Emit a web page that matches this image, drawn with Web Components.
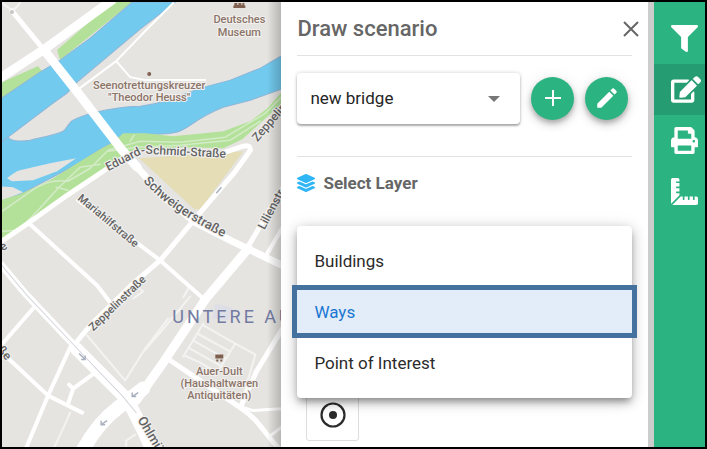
<!DOCTYPE html>
<html lang="en">
<head>
<meta charset="utf-8">
<title>Draw scenario</title>
<style>
html, body { margin: 0; height: 100%; }
body { font-family: Roboto, "Liberation Sans", sans-serif; color: #2b2b2b; background: #fff; }
</style>
</head>
<body>
<scenario-app></scenario-app>
<script>
const define = (name, html) => {
  const t = document.createElement('template');
  t.innerHTML = html;
  customElements.define(name, class extends HTMLElement {
    constructor() {
      super();
      this.attachShadow({ mode: 'open' }).append(t.content.cloneNode(true));
    }
  });
};

/* City map: water, parks, streets and their labels */
define('city-map', `
<style>
:host { display: block; position: relative; overflow: hidden; background: #e5e4e1; }
svg { display: block; width: 100%; height: 100%; }
:host::after { content: ""; position: absolute; inset: 0 0 0 auto; width: 14px; background: linear-gradient(to right, transparent, rgba(0,0,0,.2)); }
.r { fill: none; stroke: #fff; stroke-linejoin: round; stroke-linecap: round; }
.street text, .poi text { paint-order: stroke; stroke: #f2f1ef; stroke-width: 2px; }
.street text { font: 500 11px Roboto, sans-serif; fill: #636363; }
.street .mid { font-size: 12px; }
.street .major { font-size: 13px; }
.poi text { font: 500 11px Roboto, sans-serif; fill: #8c7468; text-anchor: middle; }
.area { font: 400 18px Roboto, sans-serif; fill: #737ba3; letter-spacing: 3px; }
</style>
<svg viewBox="2 2 279 445" preserveAspectRatio="xMinYMin slice" role="img" aria-label="Map">
  <rect x="0" y="0" width="290" height="460" fill="#e5e4e1"/>
  <path fill="#b4e19a" d="M0 83 38 66 42 71 0 100ZM57 50 112 2 132 2 60 60Z"/>
  <path fill="#72cbef" stroke="#8eb6d8" d="M0 99 40 72 60 60 90 38 132 2H175L140 29 77 82 67 93 53 103 8 137 0 143Z"/>
  <path fill="#72cbef" stroke="#8eb6d8" d="M0 143 8 137C12 142 25 141 30 140C42 137 55 135 63 131C68 128 68 121 75 119C90 112 120 106 140 106C170 102 185 93 200 88L230 80 260 68 284 54V88L250 100 223 107C205 114 197 120 190 125C180 132 176 134 150 134H123L113 142 100 149 77 164 20 194 0 200Z"/>
  <path fill="#e5e4e1" d="M7 178C12 174 16 171 20 170L50 163 76 158 57 171 33 180 12 181ZM0 186 13 187 23 192 0 201Z"/>
  <path fill="#b4e19a" d="M284 89 267 108 250 121 223 131 173 136 145 133H123L113 142 100 149 77 163 50 180 20 194 0 200V243L27 223 67 195 112 165 135 150 180 147 223 148 242 139 284 101Z"/>
  <path class="r" style="stroke:#d3ebc7" stroke-width="1.5" d="M2 211 32 190Q50 178 68 181L90 168 108 150 140 141 180 142 225 137 265 113 281 97M2 231 18 230 37 211 58 188 80 167 100 164M56 187 68 190M108 151 138 147 180 145 230 140 260 121M130 141 134 135"/>
  <path fill="#e4ddb6" d="M139 158 243 151 200 209H194Z"/>
  <path fill="#dedfe6" d="M215 303 232 307 228 320 212 318Z"/>
  <g class="r">
    <path stroke="#f3f3f2" stroke-width="2" d="M140 355 160 332 190 296M183 297 188 288M53 449 63 428 70 412M87 335 125 380 145 348 168 318M203 323 183 356M203 325 235 343 255 354 240 405M197 333 230 351M193 340 225 358M188 347 220 365M184 355 200 362 215 371M235 343 215 375M13 11 20 3M13 11 2 3M126 449V440L135 434M133 298 143 291 137 287"/>
    <path stroke-width="2" d="M77 90 116 61 145 31 173 3M116 61 130 77 145 80 205 80"/>
    <path stroke-width="9" d="M0 78 43 50 112 0"/>
    <path stroke-width="5" d="M12 11 44 50"/>
    <path stroke-width="9" d="M44 50 82 98 122 150 137 167"/>
    <path stroke-width="7" d="M137 167 165 198 195 222 230 240 284 266"/>
    <path stroke-width="5" d="M0 242 28 223 67 195 112 165 137 151M222 153 243 146Q250 144 250 150L235 171 200 212 160 260 134 282 90 325 76 342"/>
    <path stroke-width="4" d="M30 224 97 285 110 302M78 200 140 245 160 260 204 299M33 308 0 346M4 354 48 395 82 412M70 347 48 395 25 450M95 372 73 388 68 403M73 388 69 384M267 253 284 224"/>
    <path stroke-width="5" d="M246 249 262 222 284 185M167 358 197 378 240 407C260 420 264 434 280 449M240 407 256 371 284 325"/>
    <path stroke-width="3" d="M243 407 253 410 282 408M270 435 282 426"/>
    <path stroke-width="9" d="M248 248 205 299 163 362 136 400"/>
    <path stroke-width="14" d="M143 388 118 407Q98 422 83 449"/>
    <path stroke-width="7" d="M0 263 27 295 77 348"/>
    <path stroke-width="13" d="M76 348 97 369 128 400 143 430 153 452"/>
    <path stroke="#d5d6dc" stroke-width="1" d="M0 263 27 295 77 348 97 369 122 395 136 412"/>
  </g>
  <path fill="none" stroke="#abb0bf" stroke-width="1.5" d="m79 353 6 6m0-4v4h-4M107 420l-6 4m0-4v4h4M138 392l-6 4m0-4v4h4M216 193l5-6"/>
  <circle cx="12" cy="12" r="2" fill="#c7c4c3"/>
  <g class="street">
    <path id="eduard" fill="none" d="M108 171 139 155Q145 153 154 154L235 158"/>
    <path id="schweiger" fill="none" d="M143 181Q169 212 240 245"/>
    <text class="mid"><textPath href="#eduard">Eduard-Schmid-Straße</textPath></text>
    <text class="major"><textPath href="#schweiger">Schweigerstraße</textPath></text>
    <text transform="translate(77 199) rotate(40)">Mariahilfstraße</text>
    <text transform="translate(93 331) rotate(-44)">Zeppelinstraße</text>
    <text class="mid" transform="translate(257 142) rotate(-49)">Zeppelin</text>
    <text class="mid" transform="translate(264 230) rotate(-62)">Lilienstr</text>
    <text class="major" transform="translate(137 419) rotate(59)">Ohlmü</text>
    <text class="mid" transform="translate(3 251) rotate(-38)">e</text>
    <text class="mid" transform="translate(-3 350) rotate(48)">ße</text>
  </g>
  <g class="poi">
    <text x="239" y="23">Deutsches</text>
    <text x="239" y="36">Museum</text>
    <text x="149" y="89">Seenotrettungskreuzer</text>
    <text x="149" y="101">"Theodor Heuss"</text>
    <text x="219" y="374">Auer-Dult</text>
    <text x="219" y="386">(Haushaltwaren</text>
    <text x="219" y="398">Antiquitäten)</text>
  </g>
  <circle cx="149" cy="74" r="2" fill="#7f5f4e"/>
  <path fill="#7f5f4e" d="M233 8v-2l1-1V3h3v2h1V3h3v2h1V3h2v2l1 1v2zM215 354h8v4h-8zM216 359h2v2h-2zM220 359h2v2h-2z"/>
  <text class="area" x="172" y="323">UNTERE AU</text>
</svg>`);

/* Round action button; its glyph is slotted */
define('round-action', `
<style>
:host { display: block; flex: none; }
button { display: grid; place-items: center; width: 43px; height: 43px; padding: 0; border: 0; border-radius: 50%; background: #2bb381; color: #fff; cursor: pointer;
  box-shadow: 0 3px 5px rgba(0,0,0,.22), 0 5px 10px rgba(0,0,0,.12), 0 1px 16px rgba(0,0,0,.08); }
</style>
<button type="button"><slot></slot></button>`);

define('scenario-select', `
<style>
:host { display: block; flex: 1; min-width: 0; position: relative; }
select { appearance: none; display: block; box-sizing: border-box; width: 100%; height: 51px; padding: 0 40px 0 13px; border: 0; border-radius: 4px; background: #fff; color: #252525; font: 17px Roboto, sans-serif;
  box-shadow: 0 2px 2px rgba(0,0,0,.28), 0 0 4px rgba(0,0,0,.18); }
svg { position: absolute; right: 20px; top: 23px; pointer-events: none; }
</style>
<select aria-label="Scenario"><option>new bridge</option></select>
<svg width="12" height="6" viewBox="0 0 12 6" aria-hidden="true"><path fill="#777" d="M0 0H12L6 6Z"/></svg>`);

define('layer-option', `
<style>
:host { display: block; }
button { display: block; box-sizing: border-box; width: 100%; height: 51px; padding: 0 17px; border: 0; background: none; color: #2b2b2b; text-align: left; font: 17px Roboto, sans-serif; cursor: pointer; }
:host([selected]) { margin: -1px -5px; }
:host([selected]) button { height: 53px; border: 5px solid #44719d; background: #e3edf9; color: #1976d2; }
</style>
<button type="button"><slot></slot></button>`);

define('layer-menu', `
<style>
:host { display: block; box-sizing: border-box; padding: 9px 0 10px; border-radius: 4px; background: #fff;
  box-shadow: 0 5px 6px -2px rgba(0,0,0,.28), 0 4px 12px rgba(0,0,0,.22), 0 2px 18px rgba(0,0,0,.12); }
</style>
<slot></slot>`);

define('draw-panel', `
<style>
:host { display: block; box-sizing: border-box; position: relative; overflow: hidden; padding: 0 16px; border-right: 6px solid #cdcdcd; background: #fff; }
header { display: flex; align-items: center; justify-content: space-between; height: 53px; border-bottom: 1px solid #e2e2e2; }
h1, h2 { margin: 0; color: #666; }
h1 { font-size: 22px; line-height: 26px; font-weight: 500; }
h2 { display: flex; align-items: center; gap: 8px; height: 52px; font-size: 17px; font-weight: 700; }
.close { display: grid; margin-right: -7px; padding: 0; border: 0; background: none; cursor: pointer; }
.row { display: flex; align-items: center; gap: 11px; height: 84px; padding: 0 4px 16px 0; box-sizing: content-box; border-bottom: 1px solid #e2e2e2; }
.field { position: relative; height: 180px; }
layer-menu { position: absolute; inset: 17px 0 auto 0; z-index: 1; }
.tool { display: grid; place-items: center; width: 53px; height: 52px; margin-left: 9px; padding: 0; border: 1px solid #ddd; border-radius: 3px; background: #fff; }
</style>
<header>
  <h1>Draw scenario</h1>
  <button class="close" type="button" aria-label="Close"><svg width="16" height="16" viewBox="0 0 16 16"><path d="M1 1 15 15M15 1 1 15" fill="none" stroke="#666" stroke-width="2"/></svg></button>
</header>
<div class="row">
  <scenario-select></scenario-select>
  <round-action><svg width="16" height="16" viewBox="0 0 16 16" role="img" aria-label="Add scenario"><path d="M8 0V16M0 8H16" stroke="currentColor" stroke-width="2"/></svg></round-action>
  <round-action><svg width="26" height="26" viewBox="0 0 24 24" role="img" aria-label="Edit scenario"><path fill="currentColor" d="M3 17.25V21h3.75L17.81 9.94l-3.75-3.75zM20.71 7.04a1 1 0 0 0 0-1.41l-2.34-2.34a1 1 0 0 0-1.41 0l-1.83 1.83 3.75 3.75z"/></svg></round-action>
</div>
<h2><svg width="18" height="18" viewBox="0 0 512 512" fill="#30b5f5" aria-hidden="true"><path d="M12.41 148.02l232.94 105.67c6.8 3.09 14.49 3.09 21.29 0l232.94-105.67c16.55-7.51 16.55-32.52 0-40.03L266.65 2.31a25.6 25.6 0 0 0-21.29 0L12.41 107.98c-16.55 7.51-16.55 32.53 0 40.04zm487.18 88.28l-58.09-26.33-161.64 73.27c-7.56 3.43-15.59 5.17-23.86 5.17s-16.29-1.74-23.86-5.17L70.51 209.97l-58.1 26.33c-16.55 7.5-16.55 32.5 0 40l232.94 105.59c6.8 3.08 14.49 3.08 21.29 0L499.59 276.3c16.55-7.5 16.55-32.5 0-40zm0 127.8l-57.87-26.23-161.86 73.37c-7.56 3.43-15.59 5.17-23.86 5.17s-16.29-1.74-23.86-5.17L70.29 337.87 12.41 364.1c-16.55 7.5-16.55 32.5 0 40l232.94 105.59c6.8 3.08 14.49 3.08 21.29 0L499.59 404.1c16.55-7.5 16.55-32.5 0-40z"/></svg>Select Layer</h2>
<div class="field">
  <layer-menu>
    <layer-option>Buildings</layer-option>
    <layer-option selected>Ways</layer-option>
    <layer-option>Point of Interest</layer-option>
  </layer-menu>
</div>
<button class="tool" type="button" aria-label="Draw"><svg width="26" height="26" viewBox="0 0 26 26"><circle cx="13" cy="13" r="11.5" fill="none" stroke="#2b2b2b" stroke-width="2.2"/><circle cx="13" cy="13" r="4" fill="#2b2b2b"/></svg></button>`);

define('tool-button', `
<style>
:host { display: block; }
button { display: flex; align-items: center; width: 100%; height: 51px; padding: 0 0 0 17px; border: 0; background: none; color: #fff; cursor: pointer; }
:host([active]) button { background: #259c71; }
</style>
<button type="button"><slot></slot></button>`);

define('tool-bar', `
<style>
:host { display: block; padding-top: 11px; background: #2bb381; }
svg { display: block; fill: currentColor; flex: none; }
</style>
<tool-button><svg width="27" height="27" viewBox="0 0 512 512" role="img" aria-label="Filter"><path d="M487.976 0H24.028C2.71 0-8.047 25.866 7.058 40.971L192 225.941V432c0 7.831 3.821 15.17 10.237 19.662l80 55.98C298.02 518.69 320 507.493 320 487.98V225.941l184.947-184.97C520.021 25.896 509.338 0 487.976 0z"/></svg></tool-button>
<tool-button active><svg width="30" height="27" viewBox="0 0 576 512" role="img" aria-label="Draw"><path d="M402.6 83.2l90.2 90.2c3.8 3.8 3.8 10 0 13.8L274.4 405.6l-92.8 10.3c-12.4 1.4-22.9-9.1-21.5-21.5l10.3-92.8L388.8 83.2c3.8-3.8 10-3.8 13.8 0zm162-22.9l-48.8-48.8c-15.2-15.2-39.9-15.2-55.2 0l-35.4 35.4c-3.8 3.8-3.8 10 0 13.8l90.2 90.2c3.8 3.8 10 3.8 13.8 0l35.4-35.4c15.2-15.3 15.2-40 0-55.2zM384 346.2V448H64V128h229.8c3.2 0 6.2-1.3 8.5-3.5l40-40c7.6-7.6 2.2-20.5-8.5-20.5H48C21.5 64 0 85.5 0 112v352c0 26.5 21.5 48 48 48h352c26.5 0 48-21.5 48-48V306.2c0-10.7-12.9-16-20.5-8.5l-40 40c-2.2 2.3-3.5 5.3-3.5 8.5z"/></svg></tool-button>
<tool-button><svg width="27" height="27" viewBox="0 0 512 512" role="img" aria-label="Print"><path d="M448 192V77.25c0-8.49-3.37-16.62-9.37-22.63L393.37 9.37c-6-6-14.14-9.37-22.63-9.37H96C78.33 0 64 14.33 64 32v160c-35.35 0-64 28.65-64 64v112c0 8.84 7.16 16 16 16h48v96c0 17.67 14.33 32 32 32h320c17.67 0 32-14.33 32-32v-96h48c8.84 0 16-7.16 16-16V256c0-35.35-28.65-64-64-64zm-64 256H128v-96h256v96zm0-224H128V64h192v48c0 8.84 7.16 16 16 16h48v96zm48 72c-13.25 0-24-10.75-24-24 0-13.26 10.75-24 24-24s24 10.74 24 24c0 13.25-10.75 24-24 24z"/></svg></tool-button>
<tool-button><svg width="27" height="27" viewBox="0 0 512 512" role="img" aria-label="Measure"><path d="M160 288h-56c-4.42 0-8-3.58-8-8v-16c0-4.42 3.58-8 8-8h56v-64h-56c-4.42 0-8-3.58-8-8v-16c0-4.42 3.58-8 8-8h56V96h-56c-4.42 0-8-3.58-8-8V72c0-4.42 3.58-8 8-8h56V32c0-17.67-14.33-32-32-32H32C14.33 0 0 14.33 0 32v448c0 2.77.91 5.24 1.57 7.8L160 329.38V288zm320 64h-32v56c0 4.42-3.58 8-8 8h-16c-4.42 0-8-3.58-8-8v-56h-64v56c0 4.42-3.58 8-8 8h-16c-4.42 0-8-3.58-8-8v-56h-64v56c0 4.42-3.58 8-8 8h-16c-4.42 0-8-3.58-8-8v-56h-41.37L24.2 510.43c2.56.66 5.04 1.57 7.8 1.57h448c17.67 0 32-14.33 32-32v-96c0-17.67-14.33-32-32-32z"/></svg></tool-button>`);

define('scenario-app', `
<style>
:host { display: grid; box-sizing: border-box; height: 100vh; border: 2px solid #000; grid-template-columns: minmax(0, 3fr) minmax(0, 4fr) 51px; grid-template-rows: minmax(0, 1fr); }
</style>
<city-map></city-map>
<draw-panel></draw-panel>
<tool-bar></tool-bar>`);
</script>
</body>
</html>
